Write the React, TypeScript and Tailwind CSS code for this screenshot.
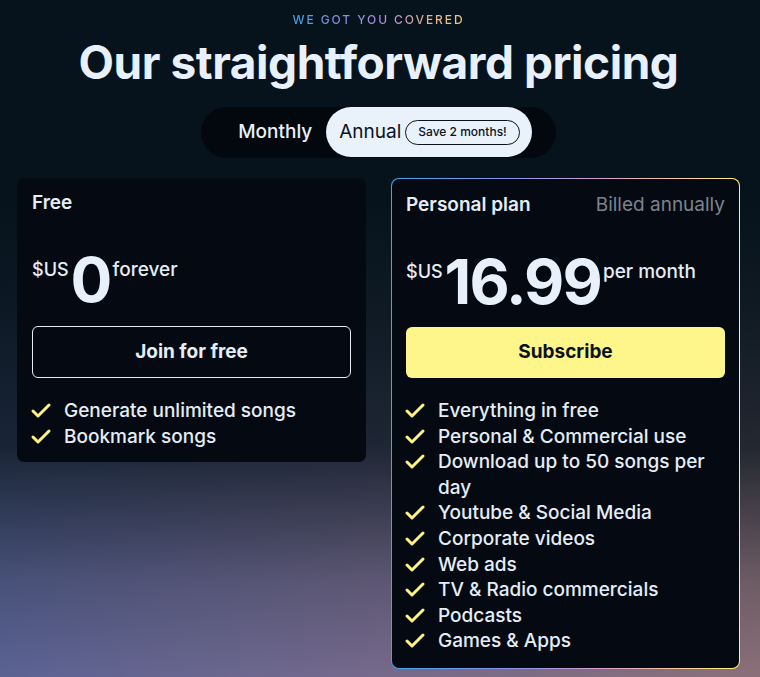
import React from "react";

const Check = () => (
  <svg
    width="24"
    height="24"
    viewBox="0 0 24 24"
    fill="none"
    stroke="#fdf27e"
    strokeWidth="3"
    strokeLinecap="round"
    strokeLinejoin="round"
    className="shrink-0 mt-[1px] -ml-[3px]"
  >
    <polyline points="20 6 9 17 4 12" />
  </svg>
);

const Feature = ({ children }: { children: React.ReactNode }) => (
  <li className="flex items-start gap-[11px]">
    <Check />
    <span>{children}</span>
  </li>
);

export default function App() {
  const personal = [
    "Everything in free",
    "Personal & Commercial use",
    "Download up to 50 songs per day",
    "Youtube & Social Media",
    "Corporate videos",
    "Web ads",
    "TV & Radio commercials",
    "Podcasts",
    "Games & Apps",
  ];
  return (
    <div
      className="w-[760px] h-[677px] overflow-hidden bg-[linear-gradient(to_bottom,rgba(6,19,28,1)_0%,rgba(6,19,28,1)_30%,rgba(6,19,28,0.93)_45%,rgba(6,19,28,0.78)_66%,rgba(6,19,28,0.5)_76%,rgba(6,19,28,0.22)_86%,rgba(6,19,28,0)_100%),linear-gradient(to_right,#5b6394_0%,#766a8c_50%,#8b7079_100%)] text-[#e5edf7]"
      style={{ fontFamily: "Inter, 'Noto Sans', sans-serif" }}
    >
      <div className="w-[757px] flex flex-col items-center">
        <div className="pt-[12px] text-[12px] leading-[16px] tracking-[0.16em] font-medium bg-[linear-gradient(to_right,#3ea2ea,#8c8ee0_30%,#b58fd6_55%,#e6b28e_80%,#f2cf86)] bg-clip-text text-transparent">
          WE GOT YOU COVERED
        </div>
        <h1 className="mt-[7px] text-[46px] leading-[54px] font-bold tracking-[-0.01em] text-[#e8f1fb]">
          Our straightforward pricing
        </h1>
        <div className="mt-[18px] h-[51px] flex items-start rounded-full bg-[#03080e] pl-[37px] pr-[24px]">
          <div className="h-[50px] flex items-center text-[19px] font-medium text-[#e8f1fb] mr-[14px]">
            Monthly
          </div>
          <div className="h-[50px] flex items-center rounded-full bg-[#e9f1fb] pl-[13px] pr-[12px] gap-[4px]">
            <span className="text-[19px] text-[#0b121c]">Annual</span>
            <span className="h-[25px] flex items-center rounded-full border border-[#0b121c] px-[12px] text-[12px] font-medium text-[#0b121c]">
              Save 2 months!
            </span>
          </div>
        </div>
      </div>

      <div className="mt-[20px] ml-[17px] flex items-start gap-[25px]">
        {/* Free card */}
        <div className="w-[349px] rounded-[7px] bg-[#050a12] px-[15px] pt-[11px] pb-[13px]">
          <div className="text-[19px] leading-[28px] font-semibold">Free</div>
          <div className="mt-[32px] flex items-start">
            <span className="mt-[7px] text-[18px] leading-[28px] font-medium">$US</span>
            <span className="mx-[2px] text-[62px] leading-[62px] font-bold tracking-[-0.03em] text-[#e8f1fb]">
              0
            </span>
            <span className="mt-[7px] text-[19px] leading-[28px] font-medium">forever</span>
          </div>
          <button className="mt-[15px] w-full h-[52px] rounded-[6px] border border-[#e5edf7] text-[19px] font-bold text-[#e5edf7]">
            Join for free
          </button>
          <ul className="mt-[20px] text-[19px] leading-[25.6px] font-medium">
            <Feature>Generate unlimited songs</Feature>
            <Feature>Bookmark songs</Feature>
          </ul>
        </div>

        {/* Personal card */}
        <div className="w-[349px] rounded-[8px] p-px bg-[linear-gradient(to_right,#3ea6f0_0%,#8f93e6_35%,#d8a2cc_62%,#f5c7a0_80%,#fff27c_100%)]">
          <div className="rounded-[7px] bg-[#050a12] px-[14px] pt-[12px] pb-[14px]">
            <div className="flex items-center justify-between text-[19px] leading-[28px]">
              <span className="font-semibold">Personal plan</span>
              <span className="text-[#7c838d]">Billed annually</span>
            </div>
            <div className="mt-[32px] flex items-start">
              <span className="mt-[7px] text-[18px] leading-[28px] font-medium">$US</span>
              <span className="mx-[2px] text-[62px] leading-[62px] font-bold tracking-[-0.03em] text-[#e8f1fb]">
                16.99
              </span>
              <span className="mt-[7px] text-[19px] leading-[28px] font-medium">per month</span>
            </div>
            <button className="mt-[14px] w-full h-[51px] rounded-[6px] bg-[#fef68a] text-[19px] font-bold text-[#0b121c]">
              Subscribe
            </button>
            <ul className="mt-[20px] text-[19px] leading-[25.6px] font-medium">
              {personal.map((p) => (
                <Feature key={p}>{p}</Feature>
              ))}
            </ul>
          </div>
        </div>
      </div>
    </div>
  );
}
